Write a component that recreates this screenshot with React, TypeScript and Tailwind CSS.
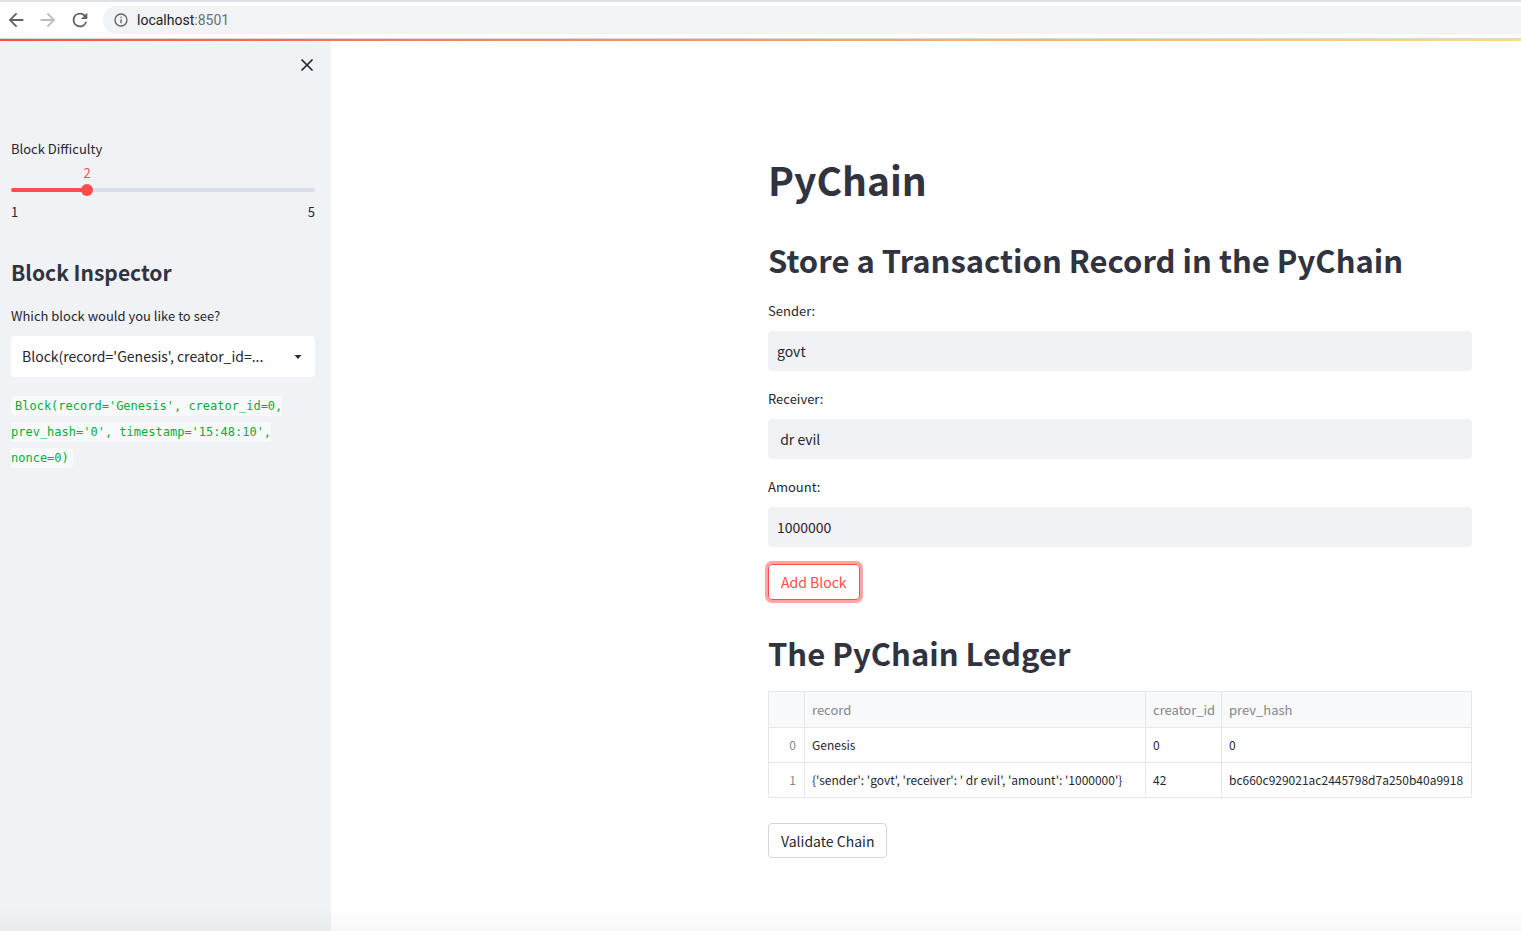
import { useState } from "react";
import type { ReactNode } from "react";

const genesis =
  "Block(record='Genesis', creator_id=0, prev_hash='0', timestamp='15:48:10', nonce=0)";

const shorten = (text: string, length: number) => `${text.slice(0, length)}...`;

const rows = [
  { record: "Genesis", creator: "0", prev: "0" },
  {
    record: "{'sender': 'govt', 'receiver': ' dr evil', 'amount': '1000000'}",
    creator: "42",
    prev: "bc660c929021ac2445798d7a250b40a9918",
  },
];

function BrowserBar() {
  return (
    <header className="border-t-2 border-b border-t-[#dee1e6] border-b-[#d5d8dc] bg-white">
      <div className="flex h-9 items-center">
        <div className="flex items-center gap-2 pl-1">
          <button aria-label="Back" className="flex size-6 items-center justify-center text-[#5f6368]">
            <svg viewBox="0 0 24 24" className="size-[22px]" fill="currentColor">
              <path d="M20 11H7.83l5.59-5.59L12 4l-8 8 8 8 1.41-1.41L7.83 13H20v-2z" />
            </svg>
          </button>
          <button aria-label="Forward" className="flex size-6 items-center justify-center text-[#babcbe]">
            <svg viewBox="0 0 24 24" className="size-[22px]" fill="currentColor">
              <path d="M12 4l-1.41 1.41L16.17 11H4v2h12.17l-5.58 5.59L12 20l8-8z" />
            </svg>
          </button>
          <button aria-label="Reload" className="flex size-6 items-center justify-center text-[#5f6368]">
            <svg viewBox="0 0 24 24" className="size-[22px]" fill="currentColor">
              <path d="M17.65 6.35A7.96 7.96 0 0 0 12 4a8 8 0 1 0 7.73 10h-2.08A6 6 0 1 1 12 6c1.66 0 3.14.69 4.22 1.78L13 11h7V4l-2.35 2.35z" />
            </svg>
          </button>
        </div>
        <div className="ml-[11px] flex h-7 flex-1 items-center gap-2 rounded-l-full bg-[#f1f3f4] pl-2.5 font-['Roboto',sans-serif] text-sm text-[#202124]">
          <svg viewBox="0 0 24 24" className="size-4" fill="#5f6368">
            <path d="M11 7h2v2h-2zm0 4h2v6h-2zm1-9a10 10 0 1 0 0 20 10 10 0 0 0 0-20zm0 18a8 8 0 1 1 0-16 8 8 0 0 1 0 16z" />
          </svg>
          <span>
            localhost<span className="text-[#6b6f74]">:8501</span>
          </span>
        </div>
      </div>
    </header>
  );
}

function Sidebar() {
  const [difficulty, setDifficulty] = useState(2);
  const share = ((difficulty - 1) / 4) * 100;
  return (
    <aside className="w-[331px] shrink-0 bg-[#f0f2f6] pr-4 pl-[11px]">
      <div className="flex justify-end pt-3">
        <button aria-label="Close sidebar" className="-mr-1 flex size-6 items-center justify-center">
          <svg viewBox="0 0 24 24" className="size-6" fill="none" stroke="currentColor" strokeWidth="1.7">
            <path d="M6.500 6.500l11 11M17.500 6.500l-11 11" />
          </svg>
        </button>
      </div>
      <div className="pt-16">
        <label htmlFor="difficulty" className="block text-[13px] leading-4">
          Block Difficulty
        </label>
        <div className="h-[26px] pt-1.5">
          <output
            htmlFor="difficulty"
            className="block w-4 -translate-x-1/2 text-center text-[13px] leading-5 text-[#ff4b4b]"
            style={{ marginLeft: `${share}%` }}
          >
            {difficulty}
          </output>
        </div>
        <div
          className="mt-[5px] flex h-1 items-center rounded-full"
          style={{
            background: `linear-gradient(to right, #ff4b4b ${share}%, #d9dee8 ${share}%)`,
          }}
        >
          <input
            id="difficulty"
            type="range"
            min={1}
            max={5}
            value={difficulty}
            onChange={(e) => setDifficulty(Number(e.target.value))}
            className="-mx-1.5 h-3 w-[calc(100%+12px)] shrink-0 appearance-none bg-transparent [&::-webkit-slider-thumb]:size-3 [&::-webkit-slider-thumb]:appearance-none [&::-webkit-slider-thumb]:rounded-full [&::-webkit-slider-thumb]:bg-[#ff4b4b]"
          />
        </div>
        <div className="mt-2.5 flex justify-between text-[13px] leading-5">
          <span>1</span>
          <span>5</span>
        </div>
      </div>
      <h2 className="mt-9 text-[21px] leading-7 font-bold text-[#31333f]">Block Inspector</h2>
      <label htmlFor="block" className="mt-5 block text-[13px] leading-5">
        Which block would you like to see?
      </label>
      <div className="relative mt-2.5">
        <select
          id="block"
          className="h-[41px] w-full appearance-none rounded bg-white pr-9 pb-0.5 pl-[11px] text-sm"
        >
          <option value={genesis}>{shorten(genesis, 35)}</option>
        </select>
        <svg viewBox="0 0 8 4" className="pointer-events-none absolute top-[19px] right-[13px] h-1 w-2" fill="currentColor">
          <path d="M.5 0h7L4 4z" />
        </svg>
      </div>
      <p className="mt-4 font-['DejaVu_Sans_Mono',monospace] text-xs leading-[26px]">
        <code className="rounded bg-[#f8f9fb] px-1 py-[3px] font-['DejaVu_Sans_Mono',monospace] text-xs text-[#09ab3b]">
          {genesis}
        </code>
      </p>
    </aside>
  );
}

function Field({ id, label, value }: { id: string; label: string; value: string }) {
  return (
    <div className="mb-[18px]">
      <label htmlFor={id} className="block text-[13px] leading-5">
        {label}
      </label>
      <input
        id={id}
        defaultValue={value}
        className="mt-2.5 block h-10 w-full rounded bg-[#f0f2f6] px-[9px] text-sm"
      />
    </div>
  );
}

function Heading({ children }: { children: ReactNode }) {
  return <h2 className="text-[31px] leading-[44px] font-bold text-[#31333f]">{children}</h2>;
}

function Ledger() {
  const cell = "border-r border-b border-[#e6e7ea] px-[7px] text-left font-normal whitespace-nowrap";
  return (
    <div className="mt-4 overflow-hidden border-t border-r border-l border-[#e6e7ea]">
      <table className="w-full table-fixed border-separate border-spacing-0 text-xs leading-5">
        <colgroup>
          <col className="w-9" />
          <col className="w-[341px]" />
          <col className="w-[76px]" />
          <col />
        </colgroup>
        <thead>
          <tr className="h-9 bg-[#f8f9fb] text-[13px] text-[#85868c]">
            <th className={cell} />
            <th className={cell}>record</th>
            <th className={cell}>creator_id</th>
            <th className="border-b border-[#e6e7ea] px-[7px] text-left font-normal">prev_hash</th>
          </tr>
        </thead>
        <tbody>
          {rows.map((row, i) => (
            <tr key={row.creator} className="h-[35px]">
              <th className="border-r border-b border-[#e6e7ea] px-2 text-right font-normal text-[#85868c]">{i}</th>
              <td className={cell}>{row.record}</td>
              <td className={cell}>{row.creator}</td>
              <td className="border-b border-[#e6e7ea] pl-[7px] whitespace-nowrap">{row.prev}</td>
            </tr>
          ))}
        </tbody>
      </table>
    </div>
  );
}

export default function App() {
  return (
    <div className="flex min-h-screen flex-col bg-white font-['Noto_Sans_CJK_KR',sans-serif] text-[#262730]">
      <BrowserBar />
      <div className="h-0.5 bg-linear-to-r from-[#ff4b4b] to-[#ffdc78]" />
      <div className="relative flex flex-1">
        <Sidebar />
        <main className="min-w-0 flex-1 pt-[110px] pr-[49px] pl-[437px]">
          <h1 className="text-[39px] leading-[56px] font-bold text-[#31333f]">PyChain</h1>
          <div className="mt-[31px] mb-[19px]">
            <Heading>Store a Transaction Record in the PyChain</Heading>
          </div>
          <Field id="sender" label="Sender:" value="govt" />
          <Field id="receiver" label="Receiver:" value=" dr evil" />
          <Field id="amount" label="Amount:" value="1000000" />
          <button className="-mt-px mb-[31px] block h-9 rounded border border-[#ff4b4b] px-3 text-sm text-[#ff4b4b] shadow-[0_0_0_3px_rgba(255,75,75,0.5)]">
            Add Block
          </button>
          <Heading>The PyChain Ledger</Heading>
          <Ledger />
          <button className="mt-[25px] block h-[35px] rounded border border-[#d6d6d9] px-3 text-sm">
            Validate Chain
          </button>
        </main>
        <div className="pointer-events-none absolute inset-x-0 bottom-0 h-6 bg-linear-to-b from-transparent to-black/3" />
      </div>
    </div>
  );
}
